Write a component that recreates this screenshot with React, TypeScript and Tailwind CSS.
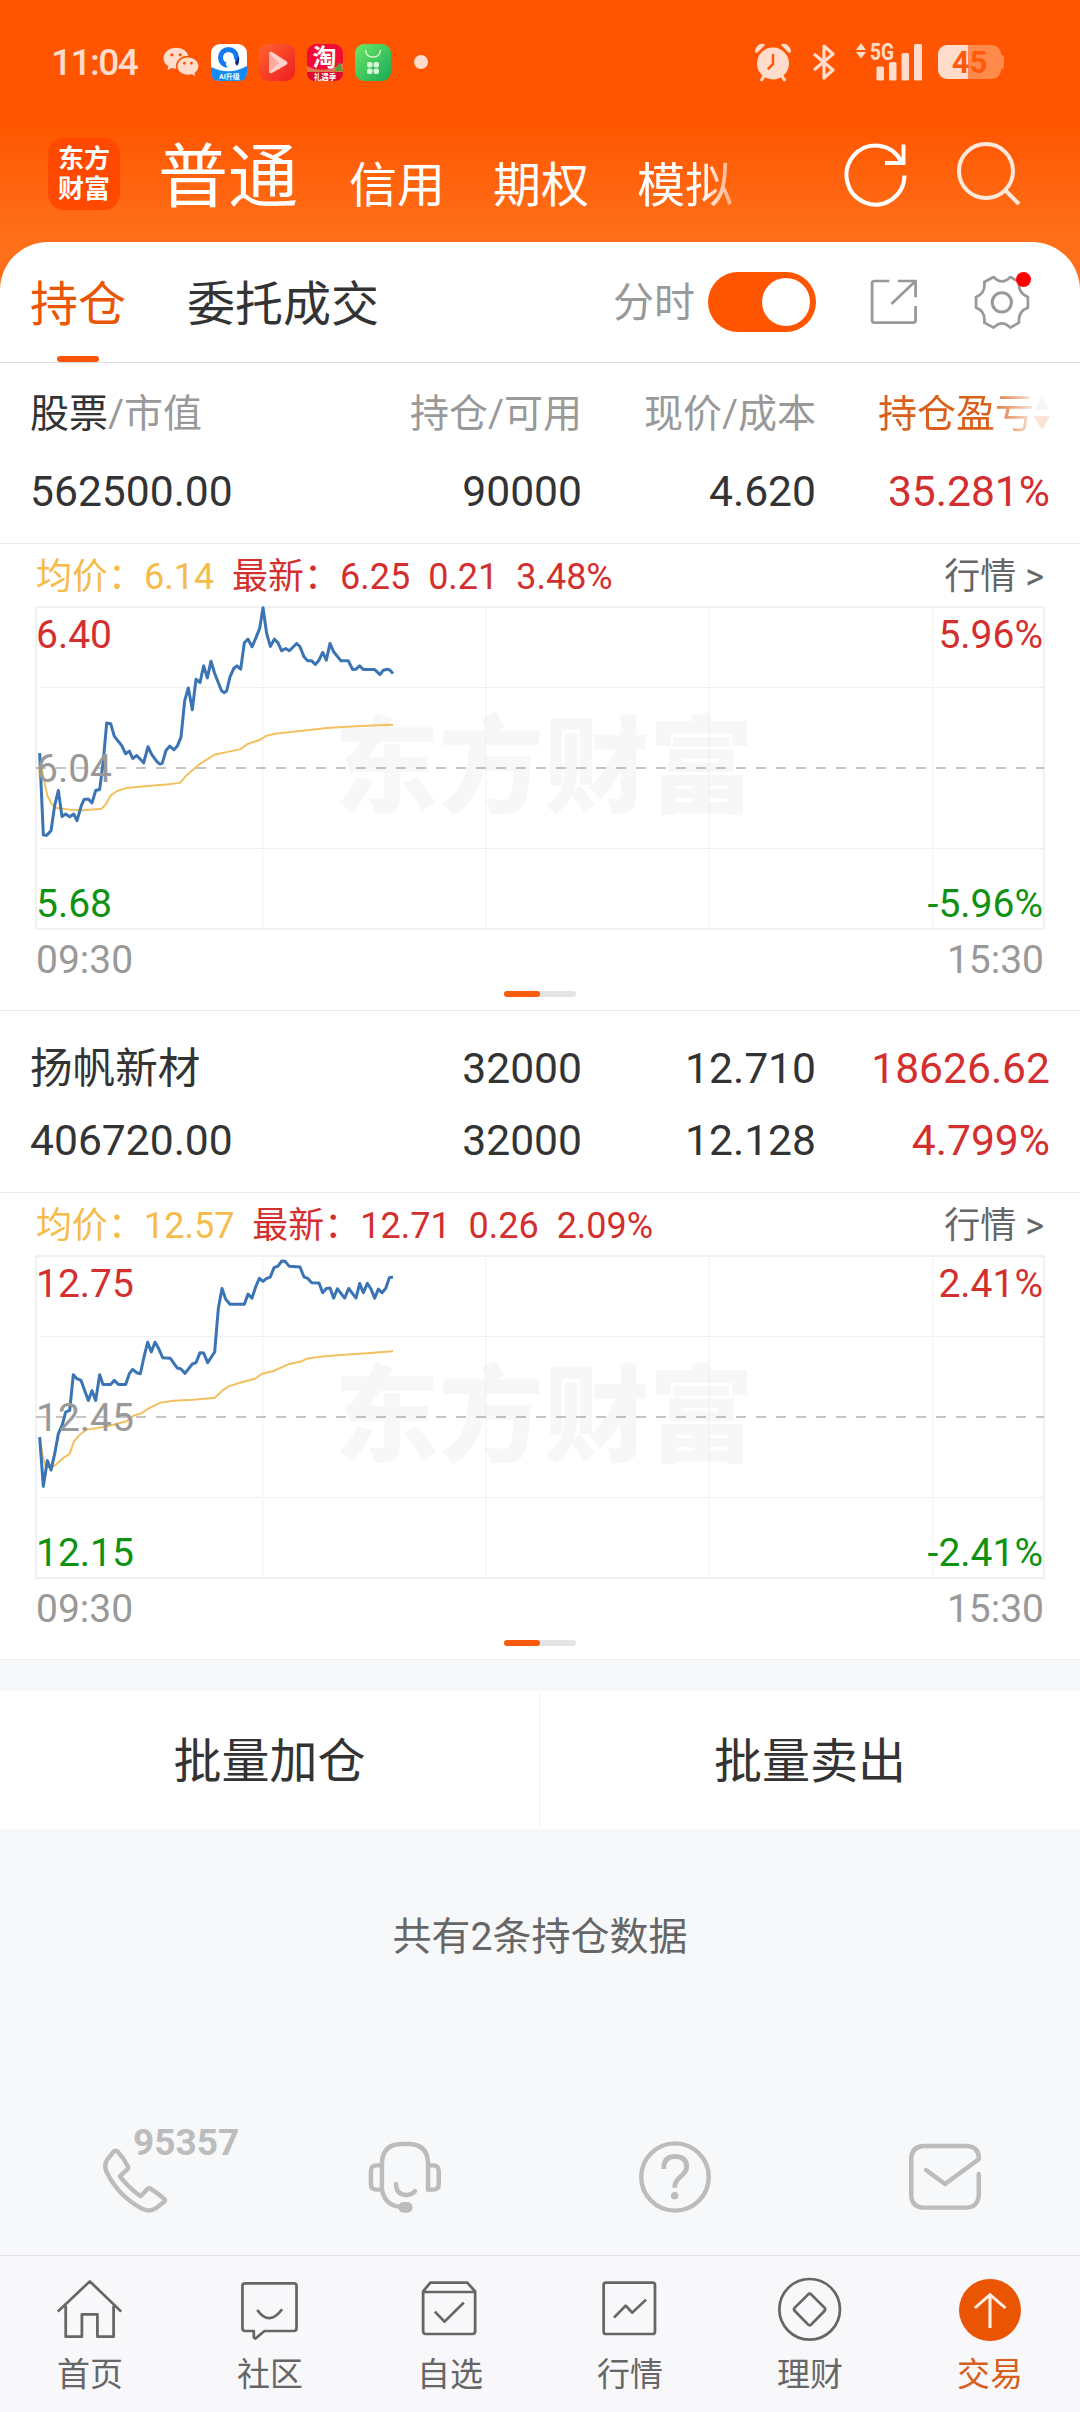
import React from 'react';
import { RiWechatFill } from 'react-icons/ri';

interface Quote {
  average: string;
  latest: string;
  change: string;
  percent: string;
  high: string;
  middle: string;
  low: string;
  range: string;
  viewTop: number;
  priceLine: string;
  averageLine: string;
}

const quotes: Quote[] = [
  {
    average: '6.14',
    latest: '6.25',
    change: '0.21',
    percent: '3.48%',
    high: '6.40',
    middle: '6.04',
    low: '5.68',
    range: '5.96%',
    viewTop: 201,
    priceLine:
      '119,638 130,883 140,884 153,870 164,795 175,750 186,828 197,820 209,828 221,820 231,840 244,795 252,777 265,775 276,787 287,750 299,747 310,660 320,548 332,550 343,588 365,615 377,640 388,632 398,654 410,645 431,667 444,619 455,642 472,665 480,671 487,668 498,630 509,617 522,628 532,617 543,590 554,482 565,443 577,508 588,417 600,427 611,377 622,413 633,363 644,400 664,450 672,457 680,452 690,410 701,385 711,377 722,387 733,308 744,297 756,320 767,295 779,265 789,203 800,280 811,319 823,297 834,308 845,332 857,325 868,332 890,310 900,320 912,350 923,362 935,362 946,373 957,360 968,337 979,360 990,310 1001,335 1023,362 1045,362 1058,388 1068,387 1079,377 1090,388 1124,388 1140,403 1150,390 1162,387 1170,390 1179,400',
    averageLine:
      '119,650 130,710 142,765 155,790 170,802 210,807 250,809 305,804 318,790 332,765 350,752 380,742 460,735 500,732 540,727 560,704 600,670 645,642 680,635 722,626 740,612 780,598 800,586 825,580 900,572 980,563 1080,557 1179,553',
  },
  {
    average: '12.57',
    latest: '12.71',
    change: '0.26',
    percent: '2.09%',
    high: '12.75',
    middle: '12.45',
    low: '12.15',
    range: '2.41%',
    viewTop: 228,
    priceLine:
      '119,770 130,917 142,840 153,868 164,820 175,760 187,732 197,695 209,690 220,583 231,595 243,600 254,630 265,660 276,631 287,660 299,583 309,612 332,612 343,600 355,612 377,612 388,580 398,567 410,577 421,580 432,530 443,486 454,515 465,486 476,505 488,532 511,534 532,563 543,566 555,579 577,551 588,547 600,517 611,518 623,547 644,515 655,385 666,325 677,357 690,372 733,372 744,342 756,354 767,320 778,295 789,304 800,295 811,291 822,263 834,258 845,243 855,244 868,259 900,261 912,291 922,294 935,308 957,309 968,338 979,325 990,324 1001,354 1012,326 1034,354 1046,325 1068,354 1079,310 1090,338 1102,310 1112,325 1124,354 1135,327 1146,338 1157,325 1168,293 1179,291',
    averageLine:
      '119,775 130,835 138,860 160,858 190,832 209,820 222,782 240,762 260,747 290,743 335,734 380,722 400,706 425,698 445,684 480,667 520,661 580,658 645,652 665,632 685,618 720,607 765,595 785,581 820,572 865,552 905,543 920,535 960,529 1010,525 1100,519 1179,513',
  },
];

const StatusBar = () => (
  <div className="flex h-[124px] items-center text-[#ffdccc]">
    <span className="ml-[51px] w-[111px] text-[37px] font-medium leading-none tracking-[-1.5px]">11:04</span>
    <RiWechatFill className="h-[38px] w-[38px]" />
    {/* Notification app icons */}
    <div className="ml-[11px] flex gap-3">
      <svg className="h-[37px] w-9" viewBox="0 0 36 37">
        <rect width="36" height="37" rx="9" fill="#fff" />
        <path d="M0 23Q18 32 36 22V28Q36 37 27 37H9Q0 37 0 28Z" fill="#138bf5" />
        <circle cx="17.500" cy="13.500" r="8" fill="none" stroke="#1479f2" strokeWidth="5" />
        <path d="M17 24Q13 20 17 17Q18 13 22 14Q25 15 24 19Q29 20 27 24Z" fill="#fff" />
        <path d="M24 19L28 12Q29 19 26 22Z" fill="#0a2f7c" />
        <text x="18.5" y="35" textAnchor="middle" fontSize="7" fontWeight="700" fill="#fff">AI升级</text>
      </svg>
      <svg className="h-[37px] w-9" viewBox="0 0 36 37">
        <defs>
          <linearGradient id="video" x1="0" y1="0" x2="1" y2="1">
            <stop stopColor="#ff632f" />
            <stop offset="1" stopColor="#ee1d20" />
          </linearGradient>
        </defs>
        <rect width="36" height="37" rx="9" fill="url(#video)" />
        <path d="M10 10Q10 7 13 8L27 17Q30 19 27 21L13 29Q10 30 10 27Z" fill="#ffd1c8" />
        <path d="M10 9L20 19L10 28Z" fill="#ffaa9e" />
      </svg>
      <svg className="h-[37px] w-9" viewBox="0 0 36 37">
        <rect width="36" height="37" rx="9" fill="#f20b34" />
        <path d="M0 22Q18 31 36 19V29H0Z" fill="#d97a55" />
        <path d="M32 18L28 27H36Z" fill="#5a9c35" />
        <path d="M0 28H36Q36 37 27 37H9Q0 37 0 28Z" fill="#dd0930" />
        <text x="17.5" y="22" textAnchor="middle" fontSize="24" fontWeight="700" fill="#fff">淘</text>
        <text x="18" y="35.5" textAnchor="middle" fontSize="7.5" fontWeight="700" fill="#fff">礼遇季</text>
      </svg>
      <svg className="h-[37px] w-9" viewBox="0 0 36 37">
        <defs>
          <linearGradient id="bag" x1="0" y1="0" x2="1" y2="1">
            <stop stopColor="#6be765" />
            <stop offset="1" stopColor="#18a957" />
          </linearGradient>
        </defs>
        <rect width="36" height="37" rx="9" fill="url(#bag)" />
        <path d="M10.500 6Q11 13 18 13T25.500 6" fill="none" stroke="#d7f6d4" strokeWidth="1.500" />
        <g fill="#d7f6d4">
          <rect x="12" y="18" width="5.500" height="5.500" rx="2" />
          <rect x="18.500" y="18" width="5.500" height="5.500" rx="2" />
          <rect x="12" y="24.500" width="5.500" height="5.500" rx="2" />
          <rect x="18.500" y="24.500" width="5.500" height="5.500" rx="2" />
        </g>
      </svg>
    </div>
    <span className="ml-[23px] h-3.5 w-3.5 rounded-full bg-[#ffdccc]" />

    <svg className="ml-[325px] h-[40px] w-10" viewBox="0 0 40 40" fill="currentColor">
      <circle cx="20" cy="21.500" r="16" />
      <path d="M2 10Q2 5 7 2Q11 1 12 3L4 11ZM38 10Q38 5 33 2Q29 1 28 3L36 11Z" />
      <path d="M11 34L8 39M29 34L32 39" stroke="currentColor" strokeWidth="3" />
      <path d="M20 13V22L15.500 26.500" fill="none" stroke="#ff5a0a" strokeWidth="2.500" strokeLinecap="round" />
    </svg>
    <svg className="ml-[19px] h-[38px] w-6" viewBox="0 0 24 38" fill="none" stroke="currentColor" strokeWidth="3.200" strokeLinejoin="round">
      <path d="M2 11L21 27L12 35V3L21 11L2 27" />
    </svg>
    <svg className="ml-[19px] h-[44px] w-[68px]" viewBox="0 -3 68 44" fill="currentColor">
      <path d="M1 7L6 0L11 7ZM1 9L6 15.500L11 9Z" />
      <text x="15" y="16.500" fontSize="23" fontWeight="700" textLength="24" lengthAdjust="spacingAndGlyphs">5G</text>
      <rect x="21.500" y="23.500" width="7.500" height="14" rx="1.500" />
      <rect x="34" y="19" width="7.500" height="18.500" rx="1.500" />
      <rect x="46.500" y="10" width="7.500" height="27.500" rx="1.500" />
      <rect x="59" y="1" width="8" height="36.500" rx="1.500" />
    </svg>
    <div className="ml-[15px] flex h-[34px] w-[63px] items-center justify-center rounded-[9px] bg-[linear-gradient(90deg,#ffdccc_48%,#ff8a4c_48%)] text-[31px] font-bold leading-none text-[#ff5a0a]">
      45
    </div>
    <span className="h-3.5 w-[3px] rounded-r bg-[#ff8a4c]" />
  </div>
);

const Header = () => (
  <header className="h-[242px] bg-[linear-gradient(180deg,#ff5500_0%,#ff5500_50%,#ff6e18_95%)]">
    <StatusBar />
    <div className="flex h-[100px] items-center pl-12 text-white">
      <div className="flex h-[72px] w-[72px] flex-col items-center justify-center rounded-2xl bg-[#ff4800] text-[26px] font-bold leading-[30px]">
        <span>东方</span>
        <span>财富</span>
      </div>
      <nav className="ml-[38px] flex items-baseline pt-[7px] leading-none">
        <span className="mr-[51px] text-[70px]">普通</span>
        <span className="mr-12 text-[48px]">信用</span>
        <span className="mr-12 text-[48px]">期权</span>
        <span className="text-[48px] [mask-image:linear-gradient(90deg,#000_68%,rgba(0,0,0,0.45)_100%)]">模拟</span>
      </nav>
      <svg className="ml-[108px] h-[70px] w-[70px]" viewBox="0 0 70 70" fill="none" stroke="#fff" strokeWidth="4">
        <path d="M63.500 36.500A29 29.500 0 1 1 60 22" />
        <path d="M62.500 5.500V24H44" />
      </svg>
      <svg className="ml-[43px] h-[70px] w-[70px]" viewBox="0 0 70 70" fill="none" stroke="#ffe9dc" strokeWidth="4">
        <circle cx="32" cy="32" r="27" />
        <path d="M51 51L65 65" />
      </svg>
    </div>
  </header>
);

const Tabs = () => (
  <div className="flex h-[121px] items-center border-b border-[#dedede] pl-[30px]">
    <div className="relative flex h-full items-center pt-[5px] text-[48px] leading-none text-[#ea5504]">
      持仓
      <span className="absolute bottom-0 left-[27px] h-1.5 w-[42px] rounded-full bg-[#fb5607]" />
    </div>
    <span className="ml-[61px] pt-[5px] text-[48px] leading-none text-[#333]">委托成交</span>
    <span className="ml-[234px] pt-[3px] text-[41px] leading-none text-[#999]">分时</span>
    <div className="ml-[13px] flex h-[60px] w-[108px] items-center justify-end rounded-full bg-[#ff5500] pr-1.5">
      <span className="h-12 w-12 rounded-full bg-white" />
    </div>
    <svg className="ml-[53px] h-[50px] w-[50px]" viewBox="956 111 145 150" preserveAspectRatio="none" fill="none" stroke="#999" strokeWidth="8">
      <path d="M1015 123H972Q965 123 965 130V241Q965 248 972 248H1084Q1091 248 1091 241V198M1040 123H1091V172M1091 123L1021 192" />
    </svg>
    <div className="relative ml-[54px]">
      <svg className="h-[58px] w-[58px]" viewBox="1257 99 169 174" preserveAspectRatio="none" fill="none" stroke="#999" strokeWidth="8" strokeLinejoin="round">
        <path d="M1317 111Q1341 137 1366 111L1391 126Q1388 160 1417 171V203Q1388 213 1391 248L1366 263Q1341 237 1317 263L1290 248Q1294 213 1266 203V171Q1294 160 1290 126Z" />
        <ellipse cx="1341" cy="187" rx="28" ry="29" strokeWidth="9" />
      </svg>
      <span className="absolute -top-px right-0 h-[15px] w-[15px] rounded-full bg-[#ff0000]" />
    </div>
  </div>
);

const columns = 'grid grid-cols-[318px_234px_234px_234px] items-center px-[30px] leading-none';

const HoldingRow = ({ cells }: { cells: string[] }) => (
  <div className={`${columns} h-[72px] text-right text-[42.6px] text-[#333]`}>
    <span className="text-left">{cells[0]}</span>
    <span>{cells[1]}</span>
    <span>{cells[2]}</span>
    <span className="text-[#d32f2f]">{cells[3]}</span>
  </div>
);

const TableHeader = () => (
  <div className={`${columns} h-[92px] pt-2.5 text-right text-[39px] text-[#999]`}>
    <span className="text-left">
      <span className="text-[#333]">股票</span>/市值
    </span>
    <span>持仓/可用</span>
    <span>现价/成本</span>
    <div className="flex items-center justify-end text-[#d9601a]">
      <span className="[mask-image:linear-gradient(90deg,#000_70%,rgba(0,0,0,0.15)_100%)]">持仓盈亏</span>
      <svg className="h-[34px] w-4" viewBox="0 0 16 34">
        <path d="M8 0L16 13H0Z" fill="#f6f6f6" />
        <path d="M0 19H16L8 33Z" fill="#fce3d8" />
      </svg>
    </div>
  </div>
);

const MinuteChart = ({ quote }: { quote: Quote }) => (
  <div className="flex h-[468px] flex-col border-y border-[#ececec] px-9">
    <div className="flex h-[63px] items-center justify-between pt-0.5 text-[36px] leading-none">
      <div className="whitespace-pre text-[#d32f2f]">
        <span className="text-[#f5bb4b]">均价：{quote.average}</span>
        {`  最新：${quote.latest}  ${quote.change}  ${quote.percent}`}
      </div>
      <span className="text-[#666]">行情 &gt;</span>
    </div>
    <div className="relative h-[322px] text-[39px] leading-none">
      {/* Watermark */}
      <div className="absolute inset-0 flex items-center justify-center pl-2 text-[105px] font-black text-[#f7f7f7]">
        东方财富
      </div>
      <svg className="absolute inset-0 h-full w-full overflow-visible" viewBox={`108 ${quote.viewTop} 3024 963`} preserveAspectRatio="none" fill="none">
        <g transform={`translate(108 ${quote.viewTop})`}>
          <path d="M681 0V963M1350 0V963M2019 0V963M2690 0V963M0 241H3024M0 722H3024" stroke="#e4e4e4" strokeWidth="3" strokeDasharray="3 3" />
          <rect x="0" y="0" width="3024" height="963" stroke="#efefef" strokeWidth="5" />
          <path d="M0 481.500H3024" stroke="#8a8a8a" strokeWidth="3" strokeDasharray="30 30" />
        </g>
        <polyline points={quote.averageLine} stroke="#f3c05f" strokeWidth="6" strokeLinejoin="round" />
        <polyline points={quote.priceLine} stroke="#3b74b4" strokeWidth="9" strokeLinejoin="round" />
      </svg>
      <div className="absolute inset-0 flex items-center justify-between pt-[3px] text-[#999]">{quote.middle}</div>
      <div className="absolute inset-0 flex flex-col justify-between pb-[5px] pr-px pt-[9px]">
        <div className="flex justify-between text-[#d32f2f]">
          <span>{quote.high}</span>
          <span>{quote.range}</span>
        </div>
        <div className="flex justify-between text-[#0f9113]">
          <span>{quote.low}</span>
          <span>-{quote.range}</span>
        </div>
      </div>
    </div>
    <div className="flex h-[62px] items-center justify-between text-[39px] leading-none text-[#999]">
      <span>09:30</span>
      <span>15:30</span>
    </div>
    <div className="mx-auto flex h-1.5 w-[72px] rounded-full bg-[#e4e4e4]">
      <span className="w-9 rounded-full bg-[#f95a0b]" />
    </div>
  </div>
);

const HelpBar = () => (
  <div className="grid h-[75px] grid-cols-4 justify-items-center">
    <div className="relative">
      <svg className="h-[75px] w-[78px]" viewBox="278.750 120 226.500 225" preserveAspectRatio="none" fill="none" stroke="#bcbcbc" strokeWidth="13" strokeLinejoin="round">
        <path d="M330 155L312 178Q301 194 309 215Q344 289 412 326Q434 338 455 323L477 305Q481 301 477 297Q460 281 437 266Q432 263 428 267L408 289Q373 263 348 229L369 209Q374 205 371 199Q359 173 342 155Q336 150 330 155Z" />
      </svg>
      <span className="absolute -top-4 left-[37px] text-[37px] font-bold leading-none text-[#bcbcbc]">95357</span>
    </div>
    <svg className="h-[75px] w-[78px]" viewBox="1062.750 120 226.500 225" preserveAspectRatio="none" fill="none" stroke="#bcbcbc" strokeWidth="13" strokeLinecap="round" strokeLinejoin="round">
      <path d="M1109 269V188Q1112 133 1165 132H1188Q1240 133 1243 188V269H1257Q1274 269 1274 253V212Q1274 196 1257 196H1244M1109 196H1094Q1077 196 1077 212V253Q1077 269 1094 269H1109Q1118 318 1165 321M1150 252Q1150 283 1178 285Q1194 286 1205 273" />
      <rect x="1157" y="306" width="41" height="32" rx="15" fill="#bcbcbc" stroke="none" />
    </svg>
    <svg className="h-[75px] w-[78px]" viewBox="278.750 120 226.500 225" preserveAspectRatio="none" fill="none" stroke="#bcbcbc" strokeWidth="13">
      <ellipse cx="392" cy="231" rx="98" ry="101" />
      <path d="M359 207Q359 169 392 169Q426 170 426 200Q426 214 409 229Q391 243 391 263" strokeWidth="14" />
      <circle cx="391" cy="287" r="11" fill="#bcbcbc" stroke="none" />
    </svg>
    <svg className="h-[75px] w-[78px]" viewBox="1062.750 120 226.500 225" preserveAspectRatio="none" fill="none" stroke="#bcbcbc" strokeWidth="13" strokeLinecap="round" strokeLinejoin="round">
      <path d="M1274 222V287Q1271 321 1240 323H1112Q1080 321 1078 287V174Q1080 141 1112 138H1240Q1272 141 1274 170V178L1176 252L1121 210" />
    </svg>
  </div>
);

const navIcon = 'h-[70px] w-[72px]';

const navItems = [
  {
    label: '首页',
    viewBox: '157 525 209 210',
    icon: <path d="M168 635L261 544L352 635M191 617V710H238V643H283V710H330V617" />,
  },
  {
    label: '社区',
    viewBox: '679.5 525 209 210',
    icon: (
      <>
        <path d="M712 550H853Q861 550 861 558V685Q861 693 853 693H768L741 716L737 712V693H712Q704 693 704 685V558Q704 550 712 550Z" />
        <path d="M747 630Q782 680 819 628" />
      </>
    ),
  },
  {
    label: '自选',
    viewBox: '1202.5 525 209 210',
    icon: <path d="M1250 548H1357L1380 574V694Q1380 702 1372 702H1237Q1229 702 1229 694V574ZM1229 576H1380M1263 635L1291 665L1347 608" />,
  },
  {
    label: '行情',
    viewBox: '157 525 209 210',
    icon: (
      <>
        <rect x="185" y="548" width="149" height="154" rx="7" />
        <path d="M215 653L249 617L268 638L308 599" />
      </>
    ),
  },
  {
    label: '理财',
    viewBox: '679.5 525 209 210',
    icon: (
      <>
        <ellipse cx="783" cy="628" rx="88" ry="91" />
        <path d="M778 584Q783 578 788 584L826 623Q830 628 826 633L788 673Q783 679 778 673L740 633Q735 628 740 623Z" />
      </>
    ),
  },
];

const BottomNav = () => (
  <nav className="grid h-[157px] grid-cols-6 border-t border-[#e2e2e4] bg-[#f8f8fb] pt-[19px] text-[33px] leading-none text-[#666]">
    {navItems.map((item) => (
      <div key={item.label} className="flex flex-col items-center gap-[13px]">
        <svg className={navIcon} viewBox={item.viewBox} preserveAspectRatio="none" fill="none" stroke="#666" strokeWidth="8" strokeLinejoin="round">
          {item.icon}
        </svg>
        <span>{item.label}</span>
      </div>
    ))}
    <div className="flex flex-col items-center gap-[13px] text-[#d95d1c]">
      <svg className={navIcon} viewBox="1202.5 525 209 210" preserveAspectRatio="none" fill="none">
        <ellipse cx="1307" cy="630" rx="90" ry="93" fill="#ea5504" />
        <path d="M1307 684V584M1263 624L1307 584L1352 624" stroke="#fff1e8" strokeWidth="9" />
      </svg>
      <span>交易</span>
    </div>
  </nav>
);

export default function App() {
  return (
    <div className="flex h-[2412px] w-[1080px] flex-col overflow-hidden bg-[#f7f8fa] font-['Roboto','Noto_Sans_CJK_SC',sans-serif]" lang="zh-CN">
      <Header />
      <div className="bg-[#ff6e18]">
        <main className="rounded-t-[48px] bg-white">
          <Tabs />
          <TableHeader />
          <div className="h-[88px]">
            <HoldingRow cells={['562500.00', '90000', '4.620', '35.281%']} />
          </div>
          <MinuteChart quote={quotes[0]} />
          <div className="h-[181px] pt-[21px]">
            <HoldingRow cells={['扬帆新材', '32000', '12.710', '18626.62']} />
            <HoldingRow cells={['406720.00', '32000', '12.128', '4.799%']} />
          </div>
          <MinuteChart quote={quotes[1]} />
        </main>
      </div>

      {/* Batch actions */}
      <div className="mt-[31px] grid h-[138px] grid-cols-2 items-center bg-white text-center text-[48px] leading-none text-[#333]">
        <span className="border-r border-[#f3f3f3] pb-[43px] pt-[47px]">批量加仓</span>
        <span className="pt-1">批量卖出</span>
      </div>
      <p className="pt-[89px] text-center text-[39px] leading-none text-[#666]">共有2条持仓数据</p>

      <div className="mt-auto">
        <div className="h-[115px]">
          <HelpBar />
        </div>
        <BottomNav />
      </div>
    </div>
  );
}
